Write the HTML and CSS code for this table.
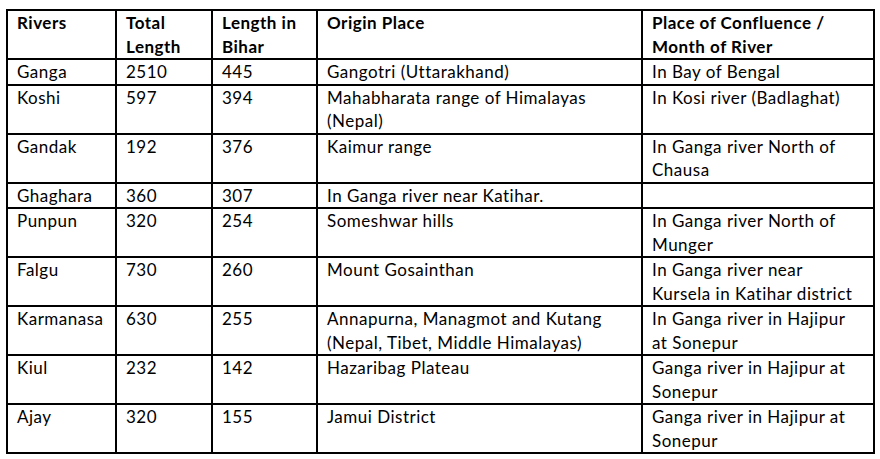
FILE: index.html
```html
<!DOCTYPE html>
<html lang="en">
<head>
<meta charset="utf-8">
<title>Rivers of Bihar</title>
<link rel="stylesheet" href="styles.css">
</head>
<body>
<table class="rivers">
  <colgroup>
    <col class="c-river">
    <col class="c-total">
    <col class="c-bihar">
    <col class="c-origin">
    <col class="c-conf">
  </colgroup>
  <thead>
    <tr>
      <th>Rivers</th>
      <th>Total<br>Length</th>
      <th>Length in<br>Bihar</th>
      <th>Origin Place</th>
      <th>Place of Confluence /<br>Month of River</th>
    </tr>
  </thead>
  <tbody>
    <tr><td>Ganga</td><td>2510</td><td>445</td><td>Gangotri (Uttarakhand)</td><td>In Bay of Bengal</td></tr>
    <tr><td>Koshi</td><td>597</td><td>394</td><td>Mahabharata range of Himalayas<br>(Nepal)</td><td>In Kosi river (Badlaghat)</td></tr>
    <tr><td>Gandak</td><td>192</td><td>376</td><td>Kaimur range</td><td>In Ganga river North of<br>Chausa</td></tr>
    <tr><td>Ghaghara</td><td>360</td><td>307</td><td>In Ganga river near Katihar.</td><td></td></tr>
    <tr><td>Punpun</td><td>320</td><td>254</td><td>Someshwar hills</td><td>In Ganga river North of<br>Munger</td></tr>
    <tr><td>Falgu</td><td>730</td><td>260</td><td>Mount Gosainthan</td><td>In Ganga river near<br>Kursela in Katihar district</td></tr>
    <tr><td>Karmanasa</td><td>630</td><td>255</td><td>Annapurna, Managmot and Kutang<br>(Nepal, Tibet, Middle Himalayas)</td><td>In Ganga river in Hajipur<br>at Sonepur</td></tr>
    <tr><td>Kiul</td><td>232</td><td>142</td><td>Hazaribag Plateau</td><td>Ganga river in Hajipur at<br>Sonepur</td></tr>
    <tr><td>Ajay</td><td>320</td><td>155</td><td>Jamui District</td><td>Ganga river in Hajipur at<br>Sonepur</td></tr>
  </tbody>
</table>
</body>
</html>
```

FILE: styles.css
```css
html, body {
  margin: 0;
  padding: 0;
  background: #ffffff;
}

body {
  font-family: Lato, "Open Sans", "Liberation Sans", sans-serif;
  font-size: 17px;
  color: #000000;
}

.rivers {
  margin: 9px 0 0 6px;
  border-collapse: collapse;
  table-layout: fixed;
  width: 867px;
}

.c-river { width: 109px; }
.c-total { width: 96px; }
.c-bihar { width: 105px; }
.c-origin { width: 325px; }
.c-conf { width: 232px; }

.rivers th,
.rivers td {
  border: 2px solid #000000;
  padding: 0 2px 0 9px;
  line-height: 23.5px;
  letter-spacing: 0.5px;
  text-align: left;
  vertical-align: top;
  white-space: nowrap;
  overflow: hidden;
}

.rivers th {
  font-weight: 700;
}

.rivers td {
  font-weight: 400;
}
```
